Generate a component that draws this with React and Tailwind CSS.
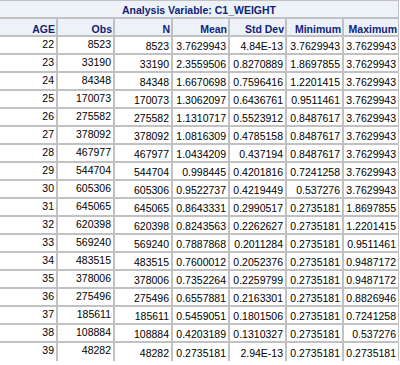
import React from "react";

const rows = [
  ["22", "8523", "8523", "3.7629943", "4.84E-13", "3.7629943", "3.7629943"],
  ["23", "33190", "33190", "2.3559506", "0.8270889", "1.8697855", "3.7629943"],
  ["24", "84348", "84348", "1.6670698", "0.7596416", "1.2201415", "3.7629943"],
  ["25", "170073", "170073", "1.3062097", "0.6436761", "0.9511461", "3.7629943"],
  ["26", "275582", "275582", "1.1310717", "0.5523912", "0.8487617", "3.7629943"],
  ["27", "378092", "378092", "1.0816309", "0.4785158", "0.8487617", "3.7629943"],
  ["28", "467977", "467977", "1.0434209", "0.437194", "0.8487617", "3.7629943"],
  ["29", "544704", "544704", "0.998445", "0.4201816", "0.7241258", "3.7629943"],
  ["30", "605306", "605306", "0.9522737", "0.4219449", "0.537276", "3.7629943"],
  ["31", "645065", "645065", "0.8643331", "0.2990517", "0.2735181", "1.8697855"],
  ["32", "620398", "620398", "0.8243563", "0.2262627", "0.2735181", "1.2201415"],
  ["33", "569240", "569240", "0.7887868", "0.2011284", "0.2735181", "0.9511461"],
  ["34", "483515", "483515", "0.7600012", "0.2052376", "0.2735181", "0.9487172"],
  ["35", "378006", "378006", "0.7352264", "0.2259799", "0.2735181", "0.9487172"],
  ["36", "275496", "275496", "0.6557881", "0.2163301", "0.2735181", "0.8826946"],
  ["37", "185611", "185611", "0.5459051", "0.1801506", "0.2735181", "0.7241258"],
  ["38", "108884", "108884", "0.4203189", "0.1310327", "0.2735181", "0.537276"],
  ["39", "48282", "48282", "0.2735181", "2.94E-13", "0.2735181", "0.2735181"],
];

const headers = ["AGE", "Obs", "N", "Mean", "Std Dev", "Minimum", "Maximum"];
const widths = ["w-[57px] border-l-0", "w-[57px]", "w-[58px]", "w-[57px]", "w-[57px]", "w-[57px]", "w-[56px]"];

export default function App() {
  return (
    <div
      className="w-[400px] h-[365px] bg-white text-[10.5px] leading-[12px] overflow-hidden"
      style={{ fontFamily: '"Liberation Sans", Arial, sans-serif' }}
    >
      <div className="w-[399px]">
        <div className="flex h-[18px] w-[399px] items-end justify-center border border-l-0 border-[#c1c1c1] bg-[#edf2f9] pb-[1px] font-bold text-[#112277]">
          Analysis Variable: C1_WEIGHT
        </div>
        <div className="flex">
          {headers.map((h, i) => (
            <div
              key={h}
              className={`flex h-[18px] items-end justify-end border border-[#c1c1c1] bg-[#edf2f9] pr-[1px] font-bold text-[#112277] ${widths[i]}`}
            >
              {h}
            </div>
          ))}
        </div>
        {rows.map((r, ri) => {
          const last = ri === rows.length - 1;
          return (
            <div key={ri} className="flex">
              {r.map((v, i) => (
                <div
                  key={i}
                  className={`flex justify-end border border-[#c1c1c1] pr-[2px] text-black ${widths[i]} ${
                    i < 2 ? "items-start pt-[0.5px]" : last ? "items-end pb-[2px]" : "items-end pb-[1px]"
                  } ${last ? "h-[19px] border-b-0" : "h-[18px]"}`}
                >
                  {v}
                </div>
              ))}
            </div>
          );
        })}
      </div>
    </div>
  );
}
